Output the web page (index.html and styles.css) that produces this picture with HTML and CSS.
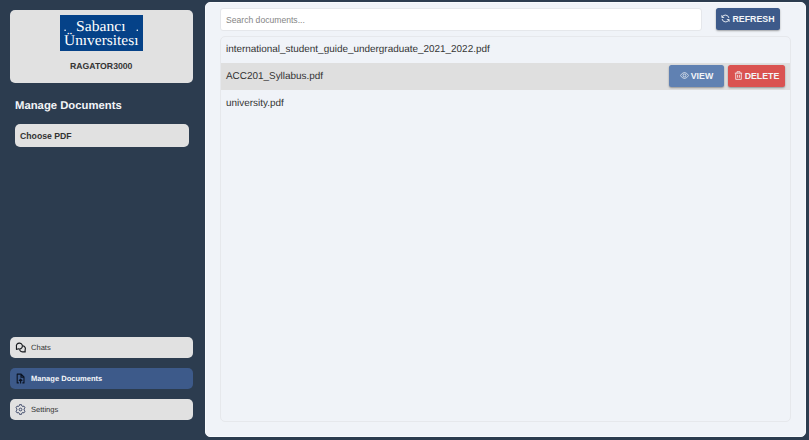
FILE: index.html
```html
<!DOCTYPE html>
<html lang="en">
<head>
<meta charset="utf-8">
<title>RAGATOR3000</title>
<link rel="stylesheet" href="styles.css">
</head>
<body>
<div class="app">
  <aside class="sidebar">
    <header class="brand">
      <svg class="logo" viewBox="0 0 83 36" role="img" aria-label="Sabancı Üniversitesi">
        <rect width="83" height="36" fill="#054288"/>
        <g fill="#fff" class="logo-text">
          <text x="16" y="15.6" font-size="15" textLength="49.5" lengthAdjust="spacingAndGlyphs">Sabancı</text>
          <text x="4" y="30.2" font-size="15" textLength="74.5" lengthAdjust="spacingAndGlyphs">Ünıversitesı</text>
          <circle cx="5.1" cy="15.2" r=".8"/><circle cx="77.3" cy="15.2" r=".8"/>
        </g>
      </svg>
      <h1 class="brand-name">RAGATOR3000</h1>
    </header>
    <h2 class="title">Manage Documents</h2>
    <button class="choose">Choose PDF</button>
    <nav class="nav">
      <a class="nav-item">
        <svg class="nav-icon" viewBox="0 0 12 12" fill="none" stroke="#15181c" stroke-width="1.25" stroke-linejoin="round"><path d="M1.6 8.1V5.4A3.3 3.3 0 1 1 7.8 5.8 3.3 3.3 0 0 1 3.7 7.4Z"/><path d="M8.5 4.1A3.2 3.2 0 0 1 11 8.6L11.1 10.8 9.3 10.6A3.3 3.3 0 0 1 5 8.3"/></svg>
        <span>Chats</span>
      </a>
      <a class="nav-item active">
        <svg class="nav-icon" viewBox="0 0 12 12" fill="none" stroke="#0b1322" stroke-width="1.2" stroke-linejoin="round"><path d="M4.2 10.8H2.4V1.2H6.7L9.8 4.3V10.8H8M6.5 1.3V4.5H9.7M6.1 11.4V6.9M4.3 8.6 6.1 6.7 7.9 8.6"/></svg>
        <span>Manage Documents</span>
      </a>
      <a class="nav-item">
        <svg class="nav-icon" viewBox="0 0 12 12" fill="none" stroke="#303c60" stroke-width=".95" stroke-linejoin="round"><path d="M4.9.7H7.1L7.5 2.2 8.3 2.7 9.8 2.3 11 4.2 9.9 5.3V6.7L11 7.8 9.8 9.7 8.3 9.3 7.5 9.8 7.1 11.3H4.9L4.5 9.8 3.7 9.3 2.2 9.7 1 7.8 2.1 6.7V5.3L1 4.2 2.2 2.3 3.7 2.7 4.5 2.2Z"/><circle cx="6" cy="6" r="1.5"/></svg>
        <span>Settings</span>
      </a>
    </nav>
  </aside>
  <main class="panel">
    <div class="toolbar">
      <input class="search" type="text" placeholder="Search documents...">
      <button class="btn refresh">
        <svg class="btn-icon" viewBox="0 0 10 10" fill="none" stroke="currentColor" stroke-width="1"><path d="M1 1.3V3.8H3.5M1.2 3.6A4 4 0 0 1 8.8 4.4M9 8.7V6.2H6.5M8.8 6.4A4 4 0 0 1 1.2 5.6"/></svg>
        <span>REFRESH</span>
      </button>
    </div>
    <ul class="list">
      <li class="row"><span>international_student_guide_undergraduate_2021_2022.pdf</span></li>
      <li class="row hovered">
        <span>ACC201_Syllabus.pdf</span>
        <div class="actions">
          <button class="btn view">
            <svg class="btn-icon" viewBox="0 0 10 10" fill="none" stroke="currentColor" stroke-width=".8"><path d="M.4 5Q5-1.6 9.6 5 5 11.6.4 5Z"/><circle cx="5" cy="5" r="1.6"/></svg>
            <span>VIEW</span>
          </button>
          <button class="btn delete">
            <svg class="btn-icon" viewBox="0 0 10 10" fill="none" stroke="currentColor" stroke-width=".9"><path d="M.9 2.4H9.1M3.3 2.2V.8H6.7V2.2M1.9 2.5V9.3H8.1V2.5M4 4.3V7.5M6 4.3V7.5"/></svg>
            <span>DELETE</span>
          </button>
        </div>
      </li>
      <li class="row"><span>university.pdf</span></li>
    </ul>
  </main>
</div>
</body>
</html>
```
FILE: styles.css
```css
* { box-sizing: border-box; }

body {
  margin: 0;
  background: #2c3c4f;
  color: #333;
  font-family: "Liberation Sans", Arial, sans-serif;
  text-rendering: geometricPrecision;
}

button, input { font-family: inherit; border: 0; margin: 0; }

.app { display: flex; width: 809px; height: 440px; }

.sidebar {
  display: flex;
  flex-direction: column;
  width: 205px;
  padding: 10px 12.5px 20px 10px;
}

.brand {
  display: flex;
  flex-direction: column;
  align-items: center;
  height: 72.5px;
  padding-top: 5px;
  border-radius: 5px;
  background: #e1e1e1;
}

.logo { width: 83px; height: 36px; }
.logo-text { font-family: "Liberation Serif", serif; }

.brand-name {
  margin: 9px 0 0;
  font-size: 8.7px;
  line-height: 12px;
}

.title {
  margin: 16px 0 0 5px;
  color: #f3f5f8;
  font-size: 11.3px;
  line-height: 15px;
}

.choose {
  height: 23px;
  margin: 10.5px 3.5px 0 5px;
  padding: 0 5px;
  border-radius: 5px;
  background: #e1e1e1;
  color: #333;
  font-size: 8.7px;
  font-weight: bold;
  text-align: left;
}

.nav { display: flex; flex-direction: column; gap: 10px; margin-top: auto; }

.nav-item {
  display: flex;
  align-items: center;
  gap: 5px;
  height: 21px;
  padding-left: 5px;
  border-radius: 5px;
  background: #e1e1e1;
  font-size: 7.55px;
}

.nav-item.active { background: #3d5a8a; color: #f5f7fa; font-weight: bold; }
.nav-icon { width: 11px; height: 11px; }

.panel {
  display: flex;
  flex-direction: column;
  gap: 5px;
  width: 601px;
  height: 435px;
  margin-top: 2px;
  padding: 5px 14px 14px;
  border: 1px solid #f8fafd;
  border-radius: 5px;
  background: #f0f3f8;
}

.toolbar { display: flex; gap: 14px; padding-right: 11px; }

.search {
  flex: 1;
  min-width: 0;
  height: 23px;
  padding: 0 5px;
  border: 1px solid #e5e7eb;
  border-radius: 3px;
  background: #fff;
  font-size: 8.6px;
}

.search::placeholder { color: #858585; }

.btn {
  display: flex;
  align-items: center;
  justify-content: center;
  gap: 2px;
  height: 22px;
  padding: 0;
  border-radius: 2.5px;
  box-shadow: 0 1px 2px rgba(0, 0, 0, .35);
  color: #f3f5f8;
  font-size: 8.8px;
  font-weight: bold;
}

.btn-icon { width: 9px; height: 9px; margin-top: -2px; }
.refresh { width: 64px; background: #3d5a8a; }
.view { width: 55px; background: #6081b2; }
.delete { width: 57px; background: #da5250; }

.list {
  flex: 1;
  margin: 0;
  padding: 0;
  border: 1px solid #e6e8ec;
  border-radius: 5px;
  list-style: none;
}

.row {
  display: flex;
  align-items: center;
  justify-content: space-between;
  height: 27px;
  padding: 0 5px;
  font-size: 9.94px;
}

.row:first-child { height: 25.5px; }
.row.hovered { background: #dfdfdf; }
.actions { display: flex; gap: 4px; }
```
